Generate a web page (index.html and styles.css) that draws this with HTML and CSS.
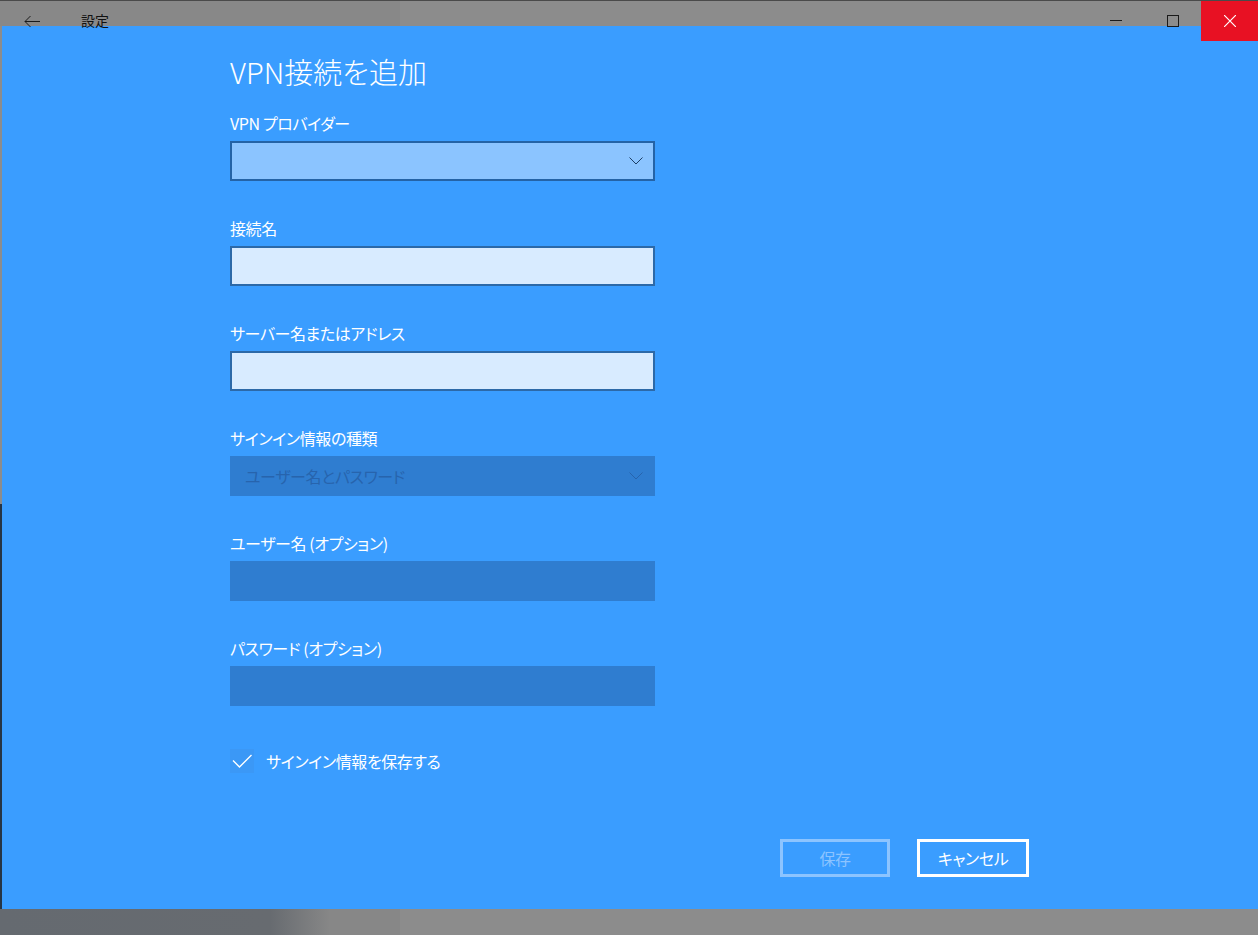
FILE: index.html
```html
<!DOCTYPE html>
<html lang="ja">
<head>
    <meta charset="UTF-8">
    <title>設定</title>
    <link rel="stylesheet" href="styles.css">
</head>
<body>
    <div class="titlebar">
        <svg class="back" width="16" height="11" viewBox="0 0 16 11">
            <path d="M16 5.5H1M6.5 0L1 5.5 6.5 11" fill="none" stroke="#1a1a1a" stroke-width="1"/>
        </svg>
        <span class="app-title">設定</span>
        <div class="caption-spacer"></div>
        <div class="caption min">
            <svg width="12" height="1" viewBox="0 0 12 1"><path d="M0 0.5H12" stroke="#1a1a1a" stroke-width="1"/></svg>
        </div>
        <div class="caption max">
            <svg width="12" height="12" viewBox="0 0 12 12"><rect x="0.5" y="0.5" width="11" height="11" fill="none" stroke="#1a1a1a" stroke-width="1"/></svg>
        </div>
        <div class="caption close">
            <svg width="12" height="12" viewBox="0 0 12 12"><path d="M0 0L12 12M12 0L0 12" stroke="#fff" stroke-width="1.2"/></svg>
        </div>
    </div>

    <div class="frame">
        <div class="edge"></div>
        <div class="panel">
            <div class="form">
                <h1 class="page-title">VPN接続を追加</h1>

                <div class="fields">
                    <div class="group">
                        <label>VPN プロバイダー</label>
                        <div class="box combo">
                            <span></span>
                            <svg width="14" height="8" viewBox="0 0 14 8"><path d="M0.5 0.5L7 7 13.5 0.5" fill="none" stroke="#1d3f66" stroke-width="1"/></svg>
                        </div>
                    </div>
                    <div class="group">
                        <label>接続名</label>
                        <div class="box input"></div>
                    </div>
                    <div class="group">
                        <label>サーバー名またはアドレス</label>
                        <div class="box input"></div>
                    </div>
                    <div class="group">
                        <label>サインイン情報の種類</label>
                        <div class="box off">
                            <span>ユーザー名とパスワード</span>
                            <svg width="14" height="8" viewBox="0 0 14 8"><path d="M0.5 0.5L7 7 13.5 0.5" fill="none" stroke="#2764ad" stroke-width="1"/></svg>
                        </div>
                    </div>
                    <div class="group">
                        <label>ユーザー名 (オプション)</label>
                        <div class="box off"></div>
                    </div>
                    <div class="group">
                        <label>パスワード (オプション)</label>
                        <div class="box off"></div>
                    </div>
                </div>

                <div class="check-row">
                    <div class="check">
                        <svg width="20" height="14" viewBox="0 0 20 14"><path d="M1 6.5L7.5 13 19.5 1" fill="none" stroke="#fff" stroke-width="1.4"/></svg>
                    </div>
                    <span>サインイン情報を保存する</span>
                </div>

                <div class="actions">
                    <button class="btn save">保存</button>
                    <button class="btn cancel">キャンセル</button>
                </div>
            </div>
        </div>
    </div>

    <div class="bottom-strip"></div>
</body>
</html>
```

FILE: styles.css
```css
html, body {
    margin: 0;
    padding: 0;
}

body {
    width: 1258px;
    height: 935px;
    overflow: hidden;
    background: #8c8c8c;
    font-family: "Noto Sans CJK JP", "Noto Sans", sans-serif;
    font-feature-settings: "palt";
}

/* title bar, drawn over the top edge of the panel */
.titlebar {
    display: flex;
    align-items: flex-start;
    height: 25px;
    border-top: 1px solid #4a4a4a;
    background: linear-gradient(to right, #888888 0, #888888 400px, #8c8c8c 400px);
    position: relative;
    z-index: 2;
}

.back {
    margin: 15px 0 0 24px;
}

.app-title {
    margin: 12px 0 0 41px;
    font-size: 14px;
    line-height: 15px;
    color: #111;
}

.caption-spacer {
    flex: 1;
}

.caption {
    width: 57px;
    height: 25px;
    display: flex;
    justify-content: center;
}

.caption.min svg {
    margin-top: 19px;
}

.caption.max svg {
    margin-top: 14px;
}

.caption.close {
    height: 40px;
    align-items: center;
    background: #e81123;
}

/* window body */
.frame {
    display: flex;
    height: 883px;
}

.edge {
    width: 2px;
    background: linear-gradient(to bottom, #8c8c8c 0, #8c8c8c 478px, #263545 478px);
}

.panel {
    flex: 1;
    background: #3a9dff;
    padding: 27px 0 0 228px;
    box-sizing: border-box;
}

.form {
    width: 799px;
}

.page-title {
    margin: 0 0 23px;
    font-size: 29px;
    font-weight: 300;
    line-height: 36px;
    color: #fff;
}

.fields {
    display: flex;
    flex-direction: column;
    gap: 36px;
}

.group label {
    display: block;
    margin-bottom: 7px;
    font-size: 16px;
    line-height: 22px;
    letter-spacing: -0.4px;
    color: #fff;
}

.box {
    width: 425px;
    height: 40px;
    box-sizing: border-box;
    display: flex;
    align-items: center;
    justify-content: space-between;
    padding: 0 12px 0 15px;
    font-size: 16px;
    letter-spacing: -0.4px;
}

.combo {
    background: #8bc4ff;
    border: 2px solid #2463a6;
    padding-right: 10px;
}

.input {
    background: #d8ebff;
    border: 2px solid #2c69a8;
}

.off {
    background: #2f7dd0;
    color: #2764ad;
}

.check-row {
    display: flex;
    align-items: center;
    gap: 12px;
    margin-top: 43px;
    font-size: 16px;
    line-height: 24px;
    letter-spacing: -0.4px;
    color: #fff;
}

.check {
    width: 24px;
    height: 24px;
    display: flex;
    align-items: center;
    justify-content: center;
    background: #3b98f6;
}

.actions {
    display: flex;
    justify-content: flex-end;
    gap: 27px;
    margin-top: 66px;
}

.btn {
    height: 38px;
    box-sizing: border-box;
    border: 3px solid;
    background: transparent;
    font: inherit;
    font-size: 16px;
    letter-spacing: -0.4px;
    padding: 0;
}

.btn.save {
    width: 110px;
    border-color: #8cc4ff;
    color: #8cc4ff;
}

.btn.cancel {
    width: 112px;
    border-color: #fff;
    color: #fff;
}

.bottom-strip {
    height: 26px;
    background: linear-gradient(to right, #656a70 0, #676b70 270px, #878787 330px, #878787 400px, #8c8c8c 400px);
}
```
